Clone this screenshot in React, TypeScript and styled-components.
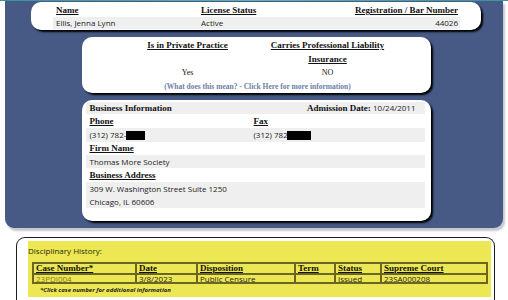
import React from 'react';
import styled, { createGlobalStyle } from 'styled-components';

const SERIF = `"Liberation Serif", "Times New Roman", serif`;
const SANS = `"Open Sans", "Noto Sans", sans-serif`;

const GlobalStyle = createGlobalStyle`
  html, body {
    margin: 0;
    padding: 0;
    background: #ffffff;
    overflow: hidden;
  }
  body {
    font-family: ${SANS};
    font-size: 8px;
    color: #222;
  }
`;

const TopStrip = styled.div`
  height: 1px;
  background: linear-gradient(90deg, #3f8f9c, #5fb0b8 50%, #3f8f9c);
`;

const Panel = styled.div`
  margin-left: 5px;
  width: 498px;
  box-sizing: border-box;
  padding: 1px 22px 7px 26px;
  background: #475a86;
  border-radius: 0 0 9px 9px;
  box-shadow: 2px 3px 2px #c6c8cc;
  display: flex;
  flex-direction: column;
  gap: 7px;
`;

const Card = styled.div<{ $narrow?: boolean }>`
  background: #ffffff;
  border-radius: 10px;
  box-shadow: 2px 2px 2px #000000;
  box-sizing: border-box;
  width: ${p => (p.$narrow ? '349px' : '100%')};
  margin: ${p => (p.$narrow ? '0 auto' : '0')};
`;

const HeadText = styled.span`
  font-family: ${SERIF};
  font-weight: bold;
  font-size: 9px;
  color: #111;
  text-decoration: underline;
`;

/* top card: name / status / bar number */
const SummaryGrid = styled.div`
  display: grid;
  grid-template-columns: 145px 1fr auto;
  padding: 1px 21px 1px 22px;
`;

const SummaryHead = styled.div<{ $right?: boolean }>`
  font-family: ${SERIF};
  font-size: 9px;
  line-height: 14px;
  padding: 0 ${p => (p.$right ? '2px' : '0')} 0 3px;
  text-align: ${p => (p.$right ? 'right' : 'left')};
`;

const SummaryValue = styled.div<{ $right?: boolean }>`
  background: #efefef;
  font-family: ${SANS};
  font-size: 8px;
  line-height: 12px;
  padding: 0 ${p => (p.$right ? '2px' : '0')} 0 3px;
  text-align: ${p => (p.$right ? 'right' : 'left')};
  color: #222;
`;

/* practice card */
const PracticeGrid = styled.div`
  display: grid;
  grid-template-columns: 140px 140px;
  justify-content: center;
  padding: 2px 0 0 3px;
  text-align: center;
`;

const PracticeHead = styled.div`
  font-family: ${SERIF};
  font-size: 9px;
  line-height: 13.5px;
  align-self: start;
`;

const PracticeValue = styled.div`
  font-family: ${SERIF};
  font-size: 8px;
  line-height: 13.5px;
  color: #111;
`;

const InfoLink = styled.a`
  grid-column: 1 / span 2;
  font-family: ${SERIF};
  font-weight: bold;
  font-size: 7.5px;
  line-height: 13px;
  color: #6f7ea6;
  text-decoration: none;
  white-space: nowrap;
`;

/* business info card */
const Business = styled.div`
  padding: 2px 6px 13px 4px;
`;

const BizRow = styled.div<{ $shade?: boolean; $h?: number }>`
  display: grid;
  grid-template-columns: 164px 1fr;
  background: ${p => (p.$shade ? '#efefef' : 'transparent')};
  line-height: ${p => p.$h ?? 13.5}px;
  padding-left: 4px;
`;

const BizTitleRow = styled.div`
  display: flex;
  justify-content: space-between;
  align-items: center;
  background: #efefef;
  font-family: ${SERIF};
  font-size: 9px;
  line-height: 12px;
  padding: 0 9px 0 4px;
`;

const BoldSerif = styled.span`
  font-family: ${SERIF};
  font-weight: bold;
  font-size: 9px;
  color: #111;
`;

const SansText = styled.span`
  font-family: ${SANS};
  font-size: 8px;
  color: #222;
`;

const Redacted = styled.span<{ $w: number; $shift?: number }>`
  display: inline-block;
  width: ${p => p.$w}px;
  height: 9px;
  background: #000;
  vertical-align: -2px;
  margin-left: ${p => p.$shift ?? 0}px;
`;

const AddressBlock = styled.div`
  display: flex;
  flex-direction: column;
`;

/* disciplinary */
const DiscBox = styled.div`
  margin: 9px 0 0 16px;
  width: 479px;
  box-sizing: border-box;
  border: 1.5px solid #1d1d1d;
  border-bottom: none;
  border-radius: 9px 9px 0 0;
  padding: 3px 3px 0 11px;
  height: 70px;
`;

const Yellow = styled.div`
  background: #ece753;
  padding: 4px 3px 2px 0;
`;

const DiscTitle = styled.div`
  font-family: ${SANS};
  font-size: 8px;
  line-height: 12px;
  color: #2a2a10;
`;

const DiscTable = styled.div`
  display: grid;
  grid-template-columns: 103px 61px 98px 40px 46px 1fr;
  border: 1px solid #6b6624;
  margin: 5px 0 0 4px;
`;

const DiscHead = styled.div`
  border: 1px solid #6b6624;
  font-family: ${SERIF};
  font-size: 9px;
  line-height: 9px;
  padding: 0 2px;
`;

const DiscCell = styled.div<{ $link?: boolean }>`
  border: 1px solid #6b6624;
  font-family: ${SANS};
  font-size: 8px;
  line-height: 7px;
  padding: 0 2px;
  color: ${p => (p.$link ? '#877d1c' : '#222')};
`;

const DiscNote = styled.div`
  font-family: ${SANS};
  font-size: 6px;
  font-weight: bold;
  font-style: italic;
  color: #222;
  line-height: 10px;
  margin: 1px 0 0 12px;
`;

const discHeads = ['Case Number*', 'Date', 'Disposition', 'Term', 'Status', 'Supreme Court'];
const discRow = ['23PDJ004', '3/8/2023', 'Public Censure', '', 'Issued', '23SA000208'];

export default function App() {
  return (
    <>
      <GlobalStyle />
      <TopStrip />
      <Panel>
        <Card>
          <SummaryGrid>
            <SummaryHead><HeadText>Name</HeadText></SummaryHead>
            <SummaryHead><HeadText>License Status</HeadText></SummaryHead>
            <SummaryHead $right><HeadText>Registration / Bar Number</HeadText></SummaryHead>
            <SummaryValue>Ellis, Jenna Lynn</SummaryValue>
            <SummaryValue>Active</SummaryValue>
            <SummaryValue $right>44026</SummaryValue>
          </SummaryGrid>
        </Card>

        <Card $narrow>
          <PracticeGrid>
            <PracticeHead><HeadText>Is in Private Practice</HeadText></PracticeHead>
            <PracticeHead><HeadText>Carries Professional Liability Insurance</HeadText></PracticeHead>
            <PracticeValue>Yes</PracticeValue>
            <PracticeValue>NO</PracticeValue>
            <InfoLink href="#">(What does this mean? - Click Here for more information)</InfoLink>
          </PracticeGrid>
        </Card>

        <Card $narrow>
          <Business>
            <BizTitleRow>
              <BoldSerif>Business Information</BoldSerif>
              <span>
                <BoldSerif>Admission Date: </BoldSerif>
                <SansText> 10/24/2011</SansText>
              </span>
            </BizTitleRow>
            <BizRow $h={14}>
              <HeadText>Phone</HeadText>
              <HeadText>Fax</HeadText>
            </BizRow>
            <BizRow $shade $h={14}>
              <SansText>(312) 782-<Redacted $w={19} /></SansText>
              <SansText>(312) 782-<Redacted $w={24} $shift={-3} /></SansText>
            </BizRow>
            <BizRow $h={13}>
              <HeadText>Firm Name</HeadText>
            </BizRow>
            <BizRow $shade $h={13}>
              <SansText>Thomas More Society</SansText>
            </BizRow>
            <BizRow $h={14}>
              <HeadText>Business Address</HeadText>
            </BizRow>
            <BizRow $shade $h={13}>
              <AddressBlock>
                <SansText>309 W. Washington Street Suite 1250</SansText>
                <SansText>Chicago, IL 60606</SansText>
              </AddressBlock>
            </BizRow>
          </Business>
        </Card>
      </Panel>

      <DiscBox>
        <Yellow>
          <DiscTitle>Disciplinary History:</DiscTitle>
          <DiscTable>
            {discHeads.map(h => (
              <DiscHead key={h}><HeadText>{h}</HeadText></DiscHead>
            ))}
            {discRow.map((v, i) => (
              <DiscCell key={i} $link={i === 0}>{v}</DiscCell>
            ))}
          </DiscTable>
          <DiscNote>*Click case number for additional information</DiscNote>
        </Yellow>
      </DiscBox>
    </>
  );
}
